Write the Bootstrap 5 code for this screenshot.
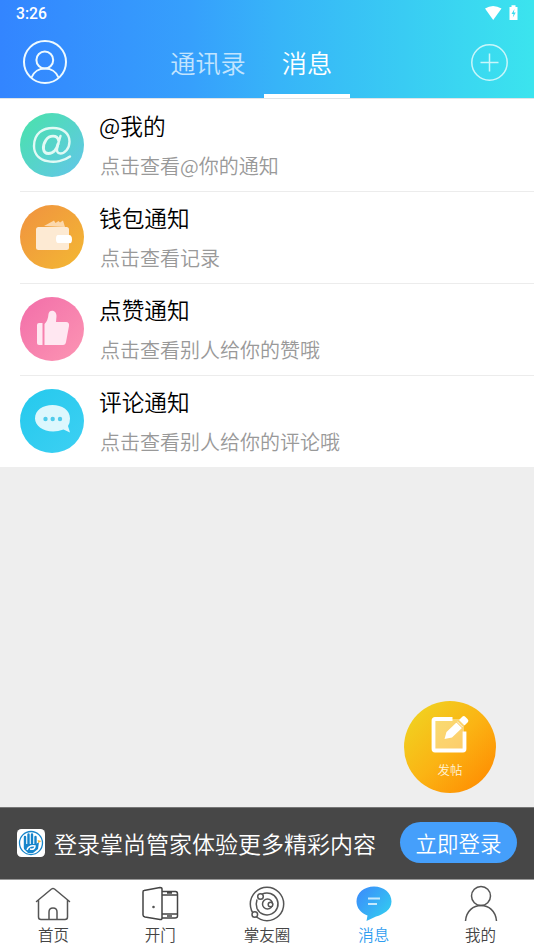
<!DOCTYPE html>
<html lang="zh-CN">
<head>
<meta charset="utf-8">
<meta name="viewport" content="width=device-width, initial-scale=1">
<title>消息</title>
<link href="https://cdn.jsdelivr.net/npm/bootstrap@5.3.0/dist/css/bootstrap.min.css" rel="stylesheet">
<style>
body{font-family:"Noto Sans CJK SC DemiLight","Noto Sans CJK SC",sans-serif;font-weight:350;background:#eee;width:534px;height:950px;overflow:hidden}
svg{display:block;flex:none}
.top-area{height:98px;background:linear-gradient(90deg,#3385ff 0%,#36a0fc 36%,#37b4f8 52%,#3be4ee 100%)}
.status{height:28px;padding:0 14px 0 16px}
.clock{font:500 15.700px/28px Roboto,sans-serif}
.bar{height:70px;padding:0 26px 0 22px}
.tab{font-size:25.200px;line-height:69px;height:70px;border:0}
.tab-off{width:76px;margin-left:102px;color:#c2e4fe}
.tab-on{width:86px;margin-left:18px;box-shadow:inset 0 -4px #fff}
.feed{border-top:1px solid #dfe4e8;height:369px}
.item{height:92px;padding-left:20px}
.item-body{margin-left:15px;height:92px}
.line{height:92px;box-shadow:0 1px #ececec}
.item:last-child .line{box-shadow:none}
.item svg{margin-top:14px}
.ttl{font-size:22.7px;line-height:30px;margin-top:12px;color:#000}
.hint{font-size:20px;line-height:28px;margin-top:11px;color:#999;padding-left:1px}
.void{height:340px;padding:234px 38px 0 0}
.post{width:92px;height:92px;background:linear-gradient(135deg,#efd522 5%,#fbb414 50%,#ff8a00 95%);padding-top:13px}
.post span{font-size:12.5px;line-height:18px;margin-top:5px;color:#fff3d6}
.login{height:73px;background:#474747;padding:0 17px;border-bottom:1px solid #999;border-top:1px solid #777}
.login p{font-size:23px;line-height:34px;margin:-2px 0 0 9px;color:#fff;white-space:nowrap}
.login svg{margin-top:-1px}
.go{background:#459ffb;font-size:21.5px;width:117px;height:41px;line-height:38px;font-weight:350;margin-top:-2px}
.dock{height:70px;padding-top:5px}
.dock a{color:#444;font-size:15.5px;line-height:22px;text-decoration:none;width:20%}
.dock a.on{color:#2f9df0}
</style>
</head>
<body>
<header class="top-area text-white">
  <div class="status d-flex justify-content-between">
    <span class="clock">3:26</span>
    <div class="d-flex">
      <svg width="36" height="28"><path d="M1 8.500Q9 3.500 17.500 8.500L9.200 20Z" fill="#fff"/><path d="M25.500 7h2V5.300h4V7h2v13h-8Z" fill="#fff"/><path d="m30.500 9-3 5h2l-.7 3.500 3-5h-2Z" fill="#3bdcef"/></svg>
    </div>
  </div>
  <nav class="bar d-flex">
    <svg width="46" height="70" fill="none" stroke="#eefaff" stroke-width="2"><circle cx="23" cy="34" r="21"/><circle cx="22.800" cy="32" r="8.400"/><path d="M9.500 49.500C14 37.500 32 37.500 36.500 49.500"/></svg>
    <div class="tab tab-off text-center">通讯录</div>
    <div class="tab tab-on text-center">消息</div>
    <svg class="ms-auto" width="37" height="70" fill="none" stroke="#c9f6fa" stroke-width="1.500"><circle cx="18.500" cy="34.500" r="17.700"/><path d="M9.500 34.500h18M18.500 25.500v18"/></svg>
  </nav>
</header>
<main>
  <section class="feed bg-white">
    <div class="item"><div class="line d-flex">
      <svg width="64" height="64"><defs><linearGradient id="ga" x1="0" y1="0" x2="1" y2="1"><stop stop-color="#49e3a9"/><stop offset="1" stop-color="#63c5ea"/></linearGradient></defs><circle cx="32" cy="32" r="32" fill="url(#ga)"/><g fill="none" stroke="#e2faf5" stroke-width="2.400" stroke-linecap="round"><path d="M50 43.500C38 52.500 14 50.500 14 33C14 20 23 15 33 15C43 15 49.500 20.500 49.500 28.500C49.500 36 44.500 40.500 40.500 40.500C37 40.500 36.500 38 37.300 34L40.500 23"/><path stroke-width="2.900" d="M38.700 27.500C37 21.500 29.500 22 26 27C22 33 22.500 40.500 28.500 40.500C33.500 40.500 37 36 38 31"/></g></svg>
      <div class="item-body"><div class="ttl">@我的</div><div class="hint">点击查看@你的通知</div></div></div></div>
    <div class="item"><div class="line d-flex">
      <svg width="64" height="64"><defs><linearGradient id="gb" x1="0" y1="0" x2="1" y2="1"><stop stop-color="#f09240"/><stop offset="1" stop-color="#f3b833"/></linearGradient></defs><circle cx="32" cy="32" r="32" fill="url(#gb)"/><path d="m24 21 10-5.500 1.500 2.500 3-2 1.500 1.500 3-2 2 6.500Z" fill="#fbd8ad"/><rect x="16" y="22" width="33" height="23" rx="2.500" fill="#fdead3"/><path d="M38 30h11q3 0 3 4.500T49 38H38q-2 0-2-4t2-4Z" fill="#fff"/></svg>
      <div class="item-body"><div class="ttl">钱包通知</div><div class="hint">点击查看记录</div></div></div></div>
    <div class="item"><div class="line d-flex">
      <svg width="64" height="64"><defs><linearGradient id="gc" x1="0" y1="0" x2="1" y2="1"><stop stop-color="#f26ea9"/><stop offset="1" stop-color="#fc95b3"/></linearGradient></defs><circle cx="32" cy="32" r="32" fill="url(#gc)"/><g fill="#ffe7f1"><path d="M19 26h3.500v22H19q-2 0-2-2V28q0-2 2-2Z"/><path d="M24.500 27Q28 24 28.500 17C29 12 36.500 12.500 36.500 19L36 25H46Q49.500 25 49 29L46 45Q45.500 48 43 48H24.500Z"/></g></svg>
      <div class="item-body"><div class="ttl">点赞通知</div><div class="hint">点击查看别人给你的赞哦</div></div></div></div>
    <div class="item"><div class="line d-flex">
      <svg width="64" height="64"><defs><linearGradient id="gd" x1="0" y1="0" x2="1" y2="1"><stop stop-color="#25c9ed"/><stop offset="1" stop-color="#3dd0f3"/></linearGradient></defs><circle cx="32" cy="32" r="32" fill="url(#gd)"/><path d="M32.500 16C42 16 50 21 50 29.500Q50 34 48 37L50 43.500 43.500 40.500C29 46 15 39 15 29.500C15 21 23 16 32.500 16Z" fill="#dcf7fd"/><g fill="#4fcbeb"><circle cx="25.500" cy="30" r="2.200"/><circle cx="32.700" cy="30" r="2.200"/><circle cx="40" cy="30" r="2.200"/></g></svg>
      <div class="item-body"><div class="ttl">评论通知</div><div class="hint">点击查看别人给你的评论哦</div></div></div></div>
  </section>
  <section class="void d-flex justify-content-end">
    <div class="post rounded-circle d-flex flex-column align-items-center">
      <svg width="40" height="42"><path d="M4 5H34V36H4V5Z" fill="#fff" fill-opacity=".38"/><path d="M22.500 5H5Q3.500 5 3.500 6.500V35Q3.500 36.500 5 36.500H33Q34.500 36.500 34.500 35V17.500" fill="none" stroke="#fff" stroke-width="3.800"/><path d="M14.500 25 16.500 18 27.500 7.500 33 13 22 23.500Z" fill="#fff"/><path d="m29 6 3.500-3.500q1.500-1 3 .5l2 2q1.500 1.500 .5 3L34.500 11.500Z" fill="#fff"/><path d="m26.500 8 6 6" stroke="#f8bd3c" stroke-width="1"/></svg>
      <span>发帖</span>
    </div>
  </section>
</main>
<section class="login d-flex align-items-center">
  <svg width="28" height="28"><rect width="28" height="28" rx="4.500" fill="#fff"/><circle cx="14" cy="14" r="11.500" fill="none" stroke="#1685cb" stroke-width="1.300"/><path d="M8 19V8M11.500 17V5.500M15 17V5.500M18.500 17V8" stroke="#1685cb" stroke-width="2.400" stroke-linecap="round"/><path d="M7 15H19L22 13 21 20 16 24H11L7 20Z" fill="#1685cb"/><path d="M10 21Q12 16 18 17Q18 21 13 20" fill="none" stroke="#fff" stroke-width="1.500"/><path d="m20.500 11 4 1-3 2Z" fill="#f4b63c"/></svg>
  <p>登录掌尚管家体验更多精彩内容</p>
  <button class="go btn rounded-pill border-0 p-0 text-white ms-auto">立即登录</button>
</section>
<nav class="dock bg-white d-flex justify-content-between">
  <a href="#" class="d-flex flex-column align-items-center"><svg width="38" height="38" fill="none" stroke="#555" stroke-width="1.500" stroke-linejoin="round" stroke-linecap="round"><path d="M2.500 16.500 17.500 4Q19 3 20.500 4L35.500 16.500M4.500 15V32Q4.500 34.500 7 34.500H31Q33.500 34.500 33.500 32V15M15 34V27Q15 23 19 23T23 27V34"/></svg><span>首页</span></a>
  <a href="#" class="d-flex flex-column align-items-center"><svg width="38" height="38" fill="none" stroke="#444" stroke-width="1.500" stroke-linejoin="round"><path d="M3 5.500 19 2.500Q21 2.500 21 4V33Q21 35 19 34.500L4 32Q2 31.500 2 30V7Q2 5.500 3 5.500ZM21 6.500H34.500Q36.500 6.500 36.500 9V31Q36.500 33 34 33H21M21 10H36M21 29H36M26 8h5M26 31h5"/><circle cx="12.500" cy="22" r=".5"/></svg><span>开门</span></a>
  <a href="#" class="d-flex flex-column align-items-center"><svg width="38" height="38" fill="none" stroke="#555" stroke-width="1.500"><circle cx="19" cy="19" r="16.700"/><path d="M14 9.200A11 11 0 1 1 9 23.500M9 14.500Q7.500 19 9 23.500"/><circle cx="19.500" cy="19" r="5"/><circle cx="12.500" cy="11.500" r="2.800" fill="#fff"/><circle cx="6.800" cy="29.500" r="2.800" fill="#fff"/><circle cx="22.500" cy="19.500" r="2.300" fill="#fff"/></svg><span>掌友圈</span></a>
  <a href="#" class="on d-flex flex-column align-items-center"><svg width="38" height="38"><defs><linearGradient id="ge" x1="0" y1="0" x2="1" y2=".8"><stop stop-color="#3c88fb"/><stop offset="1" stop-color="#33cdf1"/></linearGradient></defs><path d="M19 1.500C29 1.500 36.500 8 36.500 16.500C36.500 25 28 29.500 21 31.500L11.500 36 12.500 30.500C6 28 1.500 23 1.500 16.500C1.500 8 9 1.500 19 1.500Z" fill="url(#ge)"/><path d="M13 13.500h12M13 19h9" stroke="#c5e9fd" stroke-width="1.800"/></svg><span>消息</span></a>
  <a href="#" class="d-flex flex-column align-items-center"><svg width="38" height="38" fill="none" stroke="#555" stroke-width="1.500"><circle cx="19" cy="11" r="9.500"/><path d="M3.500 36C5 15.300 33 15.300 34.500 36"/></svg><span>我的</span></a>
</nav>
<script src="https://cdn.jsdelivr.net/npm/bootstrap@5.3.0/dist/js/bootstrap.bundle.min.js"></script>
</body>
</html>
